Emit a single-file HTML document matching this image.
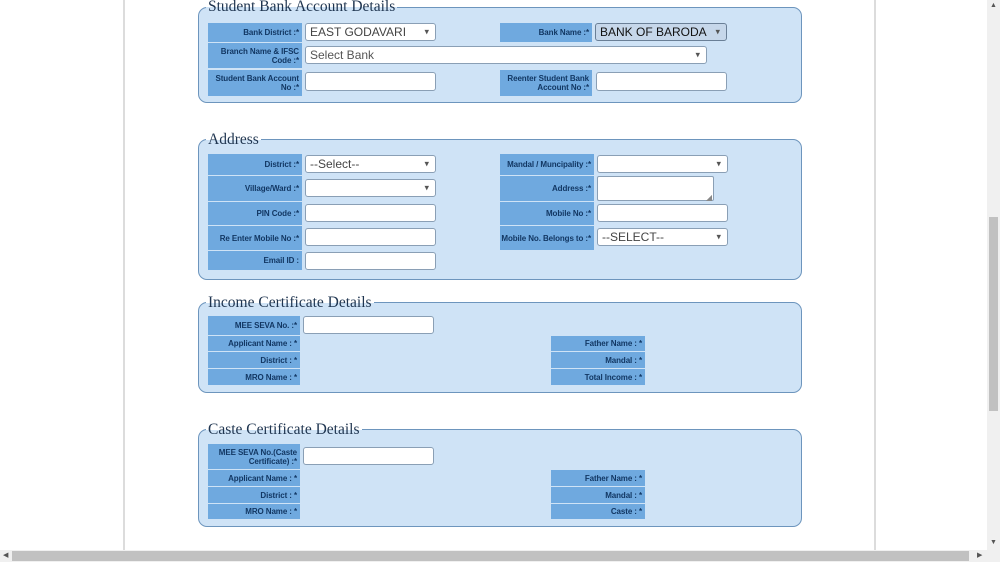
<!DOCTYPE html>
<html><head><meta charset="utf-8"><style>
*{box-sizing:border-box;margin:0;padding:0}
body{width:1000px;height:562px;overflow:hidden;background:#fff;position:relative;font-family:"Liberation Sans",Arial,sans-serif}
.vl{position:absolute;top:0;width:2px;height:550px;background:#dcdcdc}
.fs{position:absolute;left:198px;width:604px;background:#cfe3f6;border:1px solid #6d95bd;border-radius:9px}
.lg{position:absolute;left:206px;font-family:"Liberation Serif",serif;font-size:15.5px;color:#1f3550;background:linear-gradient(#fff 0,#fff 50%,#cfe3f6 50%);padding:0 2px;line-height:18px}
.lb{position:absolute;background:#6fa9df;color:#123763;font-size:8px;font-weight:bold;text-align:right;padding-right:3px;display:flex;align-items:center;justify-content:flex-end;line-height:9px;letter-spacing:-0.1px}
.in{position:absolute;background:#fff;border:1px solid #8a9fb5;border-radius:3px;font-size:12px;color:#444;padding-left:4px;display:flex;align-items:center}
.sel::after{content:"▾";position:absolute;right:6px;top:50%;transform:translateY(-50%);font-size:9px;color:#555}
</style></head><body>
<div class="vl" style="left:123px"></div>
<div class="vl" style="left:874px"></div>

<div class="fs" style="top:7px;height:96px"></div>
<div class="lg" style="top:-2px">Student Bank Account Details</div>
<div class="lb" style="left:208px;top:23px;width:94px;height:19px">Bank District :*</div>
<div class="in sel" style="left:305px;top:23px;width:131px;height:18px">EAST GODAVARI</div>
<div class="lb" style="left:500px;top:23px;width:92px;height:19px">Bank Name :*</div>
<div class="in sel" style="left:595px;top:23px;width:132px;height:18px;background:#c6d7ea;border-color:#6a7f96;color:#111">BANK OF BARODA</div>
<div class="lb" style="left:208px;top:43px;width:94px;height:25px">Branch Name &amp; IFSC Code :*</div>
<div class="in sel" style="left:305px;top:46px;width:402px;height:18px;color:#555">Select Bank</div>
<div class="lb" style="left:208px;top:70px;width:94px;height:26px">Student Bank Account No :*</div>
<div class="in" style="left:305px;top:72px;width:131px;height:19px"></div>
<div class="lb" style="left:500px;top:70px;width:92px;height:26px">Reenter Student Bank Account No :*</div>
<div class="in" style="left:596px;top:72px;width:131px;height:19px"></div>

<div class="fs" style="top:139px;height:141px"></div>
<div class="lg" style="top:131px">Address</div>
<div class="lb" style="left:208px;top:154px;width:94px;height:21px">District :*</div>
<div class="in sel" style="left:305px;top:155px;width:131px;height:18px">--Select--</div>
<div class="lb" style="left:500px;top:154px;width:94px;height:21px">Mandal / Muncipality :*</div>
<div class="in sel" style="left:597px;top:155px;width:131px;height:18px"></div>
<div class="lb" style="left:208px;top:176px;width:94px;height:25px">Village/Ward :*</div>
<div class="in sel" style="left:305px;top:179px;width:131px;height:18px"></div>
<div class="lb" style="left:500px;top:176px;width:94px;height:25px">Address :*</div>
<div class="in" style="left:597px;top:176px;width:117px;height:25px;border-radius:2px"><span style="position:absolute;right:1px;bottom:-2px;font-size:8px;color:#888">◢</span></div>
<div class="lb" style="left:208px;top:202px;width:94px;height:23px">PIN Code :*</div>
<div class="in" style="left:305px;top:204px;width:131px;height:18px"></div>
<div class="lb" style="left:500px;top:202px;width:94px;height:23px">Mobile No :*</div>
<div class="in" style="left:597px;top:204px;width:131px;height:18px"></div>
<div class="lb" style="left:208px;top:226px;width:94px;height:24px">Re Enter Mobile No :*</div>
<div class="in" style="left:305px;top:228px;width:131px;height:18px"></div>
<div class="lb" style="left:500px;top:226px;width:94px;height:24px">Mobile No. Belongs to :*</div>
<div class="in sel" style="left:597px;top:228px;width:131px;height:18px">--SELECT--</div>
<div class="lb" style="left:208px;top:251px;width:94px;height:19px">Email ID :</div>
<div class="in" style="left:305px;top:252px;width:131px;height:18px"></div>

<div class="fs" style="top:302px;height:91px"></div>
<div class="lg" style="top:294px">Income Certificate Details</div>
<div class="lb" style="left:208px;top:316px;width:92px;height:19px">MEE SEVA No. :*</div>
<div class="in" style="left:303px;top:316px;width:131px;height:18px"></div>
<div class="lb" style="left:208px;top:336px;width:92px;height:15px">Applicant Name : *</div>
<div class="lb" style="left:208px;top:352px;width:92px;height:16px">District : *</div>
<div class="lb" style="left:208px;top:369px;width:92px;height:16px">MRO Name : *</div>
<div class="lb" style="left:551px;top:336px;width:94px;height:15px">Father Name : *</div>
<div class="lb" style="left:551px;top:352px;width:94px;height:16px">Mandal : *</div>
<div class="lb" style="left:551px;top:369px;width:94px;height:16px">Total Income : *</div>

<div class="fs" style="top:429px;height:98px"></div>
<div class="lg" style="top:421px">Caste Certificate Details</div>
<div class="lb" style="left:208px;top:444px;width:92px;height:25px">MEE SEVA No.(Caste Certificate) :*</div>
<div class="in" style="left:303px;top:447px;width:131px;height:18px"></div>
<div class="lb" style="left:208px;top:470px;width:92px;height:16px">Applicant Name : *</div>
<div class="lb" style="left:208px;top:487px;width:92px;height:16px">District : *</div>
<div class="lb" style="left:208px;top:504px;width:92px;height:15px">MRO Name : *</div>
<div class="lb" style="left:551px;top:470px;width:94px;height:16px">Father Name : *</div>
<div class="lb" style="left:551px;top:487px;width:94px;height:16px">Mandal : *</div>
<div class="lb" style="left:551px;top:504px;width:94px;height:15px">Caste : *</div>

<div style="position:absolute;left:987px;top:0;width:13px;height:550px;background:#f0f0f0"></div>
<div style="position:absolute;left:989px;top:217px;width:9px;height:194px;background:#c1c1c1"></div>
<div style="position:absolute;left:990px;top:2px;font-size:7px;color:#555">▲</div>
<div style="position:absolute;left:990px;top:539px;font-size:7px;color:#555">▼</div>
<div style="position:absolute;left:0;top:550px;width:1000px;height:12px;background:#f0f0f0"></div>
<div style="position:absolute;left:12px;top:551px;width:957px;height:10px;background:#c1c1c1"></div>
<div style="position:absolute;left:3px;top:551px;font-size:7px;color:#555">◀</div>
<div style="position:absolute;left:977px;top:551px;font-size:7px;color:#555">▶</div>
</body></html>
